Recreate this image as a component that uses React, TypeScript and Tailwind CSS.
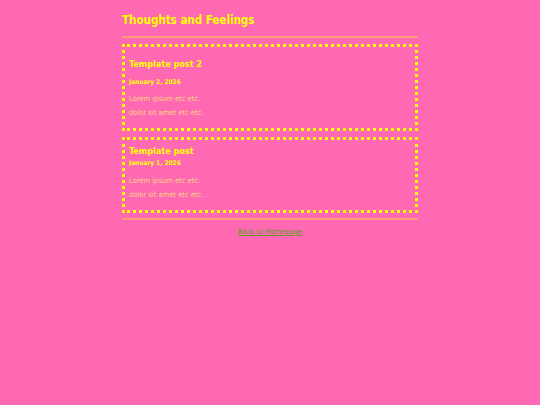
const font = "font-['DejaVu_Sans_Condensed','DejaVu_Sans',Verdana,sans-serif]"

export default function App() {
  return (
    <div className={`min-h-[405px] bg-[#ff69b4] ${font}`}>
      <div className="mx-auto w-[296px] pt-[13px]">
        <h1 className="text-[11.5px] font-bold leading-[15px] text-[#ffff00]">Thoughts and Feelings</h1>
        <div className="mt-[8px] h-[2px] bg-[#ffa07a]" />
        <div className="mt-[6px] flex flex-col gap-[6px]">
          <div className="border-[3px] border-dotted border-[#ffff00] px-[4px] pt-[11px] pb-[10px]">
            <h2 className="text-[9px] font-bold leading-[12px] text-[#ffff00]">Template post 2</h2>
            <p className="mt-[8px] text-[6.5px] font-bold leading-[9px] text-[#ffff00]">January 2, 2026</p>
            <p className="mt-[7px] text-[7.5px] leading-[10px] text-[#ffd27a]">Lorem ipsum etc etc.</p>
            <p className="mt-[4px] text-[7.5px] leading-[10px] text-[#ffd27a]">dolor sit amet etc etc.</p>
          </div>
          <div className="border-[3px] border-dotted border-[#ffff00] px-[4px] pt-[5px] pb-[10px]">
            <h2 className="text-[9px] font-bold leading-[12px] text-[#ffff00]">Template post</h2>
            <p className="mt-[2px] text-[6.5px] font-bold leading-[9px] text-[#ffff00]">January 1, 2026</p>
            <p className="mt-[8px] text-[7.5px] leading-[10px] text-[#ffd27a]">Lorem ipsum etc etc.</p>
            <p className="mt-[4px] text-[7.5px] leading-[10px] text-[#ffd27a]">dolor sit amet etc etc.</p>
          </div>
        </div>
        <div className="mt-[5px] h-[2px] bg-[#ffa07a]" />
        <div className="mt-[7px] text-center text-[7.5px] leading-[10px]">
          <a href="#" className="font-medium text-[#5e9e1e] underline">Back to Homepage</a>
        </div>
      </div>
    </div>
  )
}
